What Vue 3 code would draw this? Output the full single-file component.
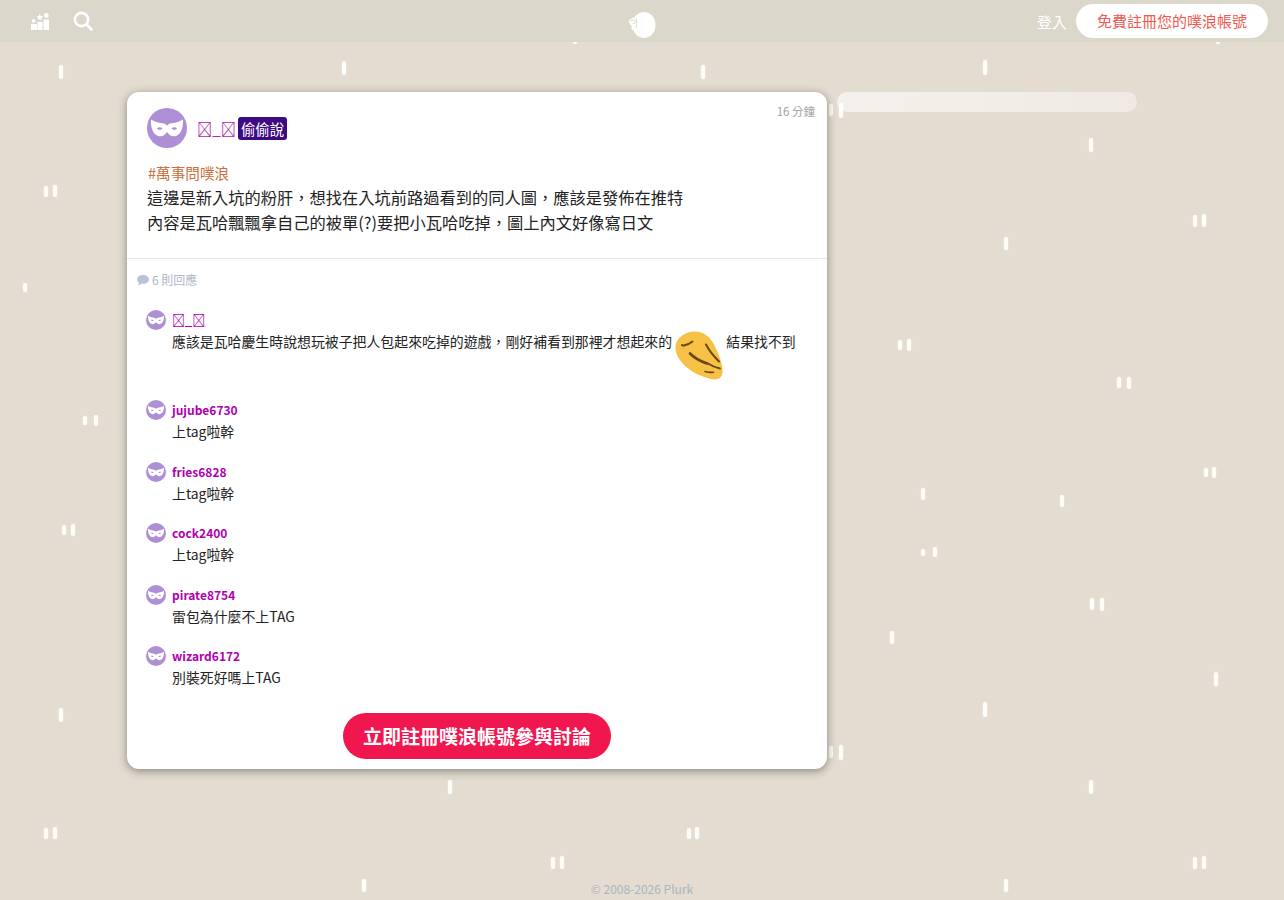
<template>
  <div class="page">
    <div class="snow">
      <i v-for="(s, idx) in specks" :key="idx" class="speck" :style="{ left: s[0] + 'px', top: s[1] + 'px', height: s[2] + 'px' }"></i>
    </div>

    <header class="nav">
      <div class="nav_left">
        <svg class="icon_top" viewBox="0 0 20 18" width="20" height="18">
          <path fill="#fff" d="M1 12h6v6H1zM7.500 10h5v8h-5zM13.500 7.500H19V18h-5.500z" />
          <circle cx="16.300" cy="3.400" r="2.400" fill="#fff" />
          <path fill="#fff" d="M9.800 1.800l1 2.200 2.300.3-1.700 1.600.5 2.300-2.100-1.200-2.100 1.200.5-2.300-1.700-1.600 2.300-.3z" />
          <circle cx="3.600" cy="8.900" r="1.800" fill="#fff" />
        </svg>
        <svg class="icon_search" viewBox="0 0 20 20" width="20" height="20">
          <circle cx="8.500" cy="8.500" r="6.600" fill="none" stroke="#fff" stroke-width="2.600" />
          <path d="M13.500 13.500L18.500 18.500" stroke="#fff" stroke-width="2.800" stroke-linecap="round" />
        </svg>
      </div>
      <svg class="logo" viewBox="0 0 30 28" width="30" height="28">
        <ellipse cx="18" cy="14" rx="11.500" ry="13" fill="#fff" />
        <path fill="#fff" d="M3 9c2-2 6-3 8-2v12c-2 1-5 0-6-2 1-.5 1-1 .6-2C4 14 2.500 11 3 9z" />
        <path fill="none" stroke="#dbd7cb" stroke-width="1" d="M4.500 9.500c2-1 4-.5 4.500 1 .4 1.500-1 2.500-2.300 2M9.500 7c1.500 2 1.800 6 .5 10" />
      </svg>
      <div class="nav_right">
        <a class="login">登入</a>
        <a class="signup">免費註冊您的噗浪帳號</a>
      </div>
    </header>

    <main class="content">
      <section class="card">
        <span class="time">16 分鐘</span>
        <div class="post">
          <div class="post_head">
            <svg class="avatar big" viewBox="0 0 40 40"><use href="#mask" /></svg>
            <span class="post_name">&#xE000;_&#xE000;</span>
            <span class="whisper">偷偷說</span>
          </div>
          <div class="post_body">
            <span class="tag">#萬事問噗浪</span><br />
            這邊是新入坑的粉肝，想找在入坑前路過看到的同人圖，應該是發佈在推特<br />
            內容是瓦哈飄飄拿自己的被單(?)要把小瓦哈吃掉，圖上內文好像寫日文
          </div>
        </div>

        <div class="replies">
          <div class="count">
            <svg viewBox="0 0 14 13" width="12" height="11">
              <path fill="#b9c3d8" d="M7 0c3.900 0 7 2.300 7 5.200s-3.100 5.200-7 5.200c-.7 0-1.300-.1-1.900-.2C4 11.300 2.500 12 1 12c.8-.8 1.300-1.800 1.400-2.800C.9 8.300 0 6.800 0 5.200 0 2.300 3.100 0 7 0z" />
            </svg>
            6 則回應
          </div>

          <div class="reply first">
            <svg class="avatar" viewBox="0 0 40 40"><use href="#mask" /></svg>
            <div class="reply_main">
              <a class="reply_name anon">&#xE000;_&#xE000;</a>
              <div class="reply_text with_emoji">
                應該是瓦哈慶生時說想玩被子把人包起來吃掉的遊戲，剛好補看到那裡才想起來的
                <svg class="emoji" viewBox="0 0 48 48" width="48" height="49">
                  <path fill="#f6c144" d="M19 0C28-.5 35 5 39 13 44 23 48 33 47.500 41 47 47 42 49 36 47.500 27 45.500 14 40 7 31 1 24-2 15 3 8 7 3 13 0 19 0z" />
                  <g fill="none" stroke="#66480f" stroke-linecap="round">
                    <path stroke-width="2" d="M7 13.500c1 .5 1.500 1 2 .5 3-.5 6-2 8.500-4" />
                    <path stroke-width="2.600" d="M15 22c5 5 11 8 17 10" />
                    <path stroke-width="2" d="M31 13c3 6 8 12 13 17" />
                    <path stroke-width="1.800" d="M33 32c3 2 7 4 12 5" />
                    <path stroke-width="1.600" d="M30 40c3 .8 6 1 8.500.8" />
                  </g>
                </svg>
                結果找不到
              </div>
            </div>
          </div>

          <div v-for="r in replies" :key="r.name" class="reply">
            <svg class="avatar" viewBox="0 0 40 40"><use href="#mask" /></svg>
            <div class="reply_main">
              <a class="reply_name">{{ r.name }}</a>
              <div class="reply_text">{{ r.text }}</div>
            </div>
          </div>
        </div>

        <div class="cta_row">
          <a class="cta">立即註冊噗浪帳號參與討論</a>
        </div>
      </section>
      <aside class="side"></aside>
    </main>

    <footer class="copy">© 2008-2026 Plurk</footer>

    <svg width="0" height="0" class="defs">
      <symbol id="mask" viewBox="0 0 40 40">
        <circle cx="20" cy="20" r="20" fill="#ae8fd6" />
        <path fill="#fff" fill-rule="evenodd" d="M4 11.500c4 2.300 7 3.300 10 3.600 2.500.2 4.800 1 6 2.700 1.200-1.700 3.500-2.500 6-2.700 3-.3 6-1.300 10-3.600.5 7-1.500 13.500-6 16-4 2-7.500.3-10-3.500-2.500 3.800-6 5.500-10 3.500C5.500 25 3.500 18.500 4 11.500zM10 20.300c1.700-1.300 4-1.300 5.500.3-1.700 1.700-4.200 1.600-5.500-.3zM30 20.300c-1.700-1.300-4-1.300-5.500.3 1.700 1.700 4.200 1.600 5.500-.3z" />
      </symbol>
    </svg>
  </div>
</template>

<script setup>
const replies = [
  { name: 'jujube6730', text: '上tag啦幹' },
  { name: 'fries6828', text: '上tag啦幹' },
  { name: 'cock2400', text: '上tag啦幹' },
  { name: 'pirate8754', text: '雷包為什麼不上TAG' },
  { name: 'wizard6172', text: '別裝死好嗎上TAG' }
]

// x, y, height
const specks = [
  [59, 65, 14], [342, 61, 14], [701, 65, 14], [983, 60, 15],
  [829, 104, 12], [839, 103, 15], [1089, 138, 14], [44, 186, 11], [53, 185, 12],
  [1193, 215, 12], [1202, 214, 13], [1004, 237, 13], [23, 283, 9],
  [898, 340, 10], [907, 339, 12], [1117, 377, 11], [1127, 377, 12],
  [83, 416, 9], [94, 415, 11], [1204, 468, 9], [1212, 467, 11],
  [921, 488, 12], [1060, 495, 12], [62, 525, 10], [71, 524, 12],
  [921, 549, 7], [933, 547, 10], [890, 631, 13], [1090, 598, 12], [1100, 598, 13],
  [1214, 672, 14], [59, 708, 14], [983, 702, 15], [829, 746, 12], [839, 745, 15],
  [448, 780, 14], [1089, 780, 14], [44, 828, 11], [53, 827, 12],
  [687, 828, 11], [695, 827, 12], [551, 857, 12], [560, 856, 13],
  [1193, 857, 12], [1202, 856, 13], [362, 879, 13], [1004, 879, 13],
  [573, 38, 6], [1216, 38, 6]
]
</script>

<style>
html,
body {
  margin: 0;
  background: #e4dcd0;
}
</style>

<style scoped>
.page {
  position: relative;
  height: 900px;
  overflow: hidden;
  background: #e4dcd0;
  font-family: 'Noto Sans CJK TC', 'Noto Sans', sans-serif;
  color: #222;
}
.defs {
  position: absolute;
}
.snow {
  position: absolute;
  inset: 0;
}
.speck {
  position: absolute;
  width: 4px;
  border-radius: 2px;
  background: #fffdf8;
  box-shadow: 0 0 2px rgba(255, 253, 248, 0.7);
}
.nav {
  position: relative;
  height: 42px;
  background: #dbd7cb;
  display: flex;
  align-items: center;
  justify-content: space-between;
  padding: 0 16px 0 30px;
}
.nav_left {
  display: flex;
  align-items: center;
  gap: 23px;
  width: 260px;
}
.logo {
  position: absolute;
  left: 626px;
  top: 11px;
}
.nav_right {
  display: flex;
  align-items: center;
  gap: 9px;
}
.login {
  color: #fff;
  font-size: 15px;
}
.signup {
  background: #fff;
  color: #f2584e;
  font-size: 15px;
  height: 34px;
  line-height: 34px;
  padding: 0 21px;
  border-radius: 17px;
}
.content {
  position: relative;
  display: flex;
  align-items: flex-start;
  gap: 10px;
  padding: 50px 0 0 127px;
}
.card {
  position: relative;
  width: 700px;
  height: 677px;
  background: #fff;
  border-radius: 12px;
  box-shadow: 0 2px 10px rgba(0, 0, 0, 0.4);
  display: flex;
  flex-direction: column;
}
.side {
  width: 300px;
  height: 20px;
  border-radius: 10px;
  background: linear-gradient(90deg, rgba(255, 255, 255, 0.58), rgba(255, 255, 255, 0.42));
}
.time {
  position: absolute;
  top: 11px;
  right: 12px;
  font-size: 11.5px;
  color: #a3a3a3;
}
.post {
  padding: 16px 20px 23px;
  border-bottom: 1px solid #e8e8e8;
}
.post_head {
  display: flex;
  align-items: center;
  height: 40px;
}
.avatar {
  width: 20px;
  height: 20px;
  flex: none;
  display: block;
}
.avatar.big {
  width: 40px;
  height: 40px;
  margin-right: 10px;
}
.post_name {
  color: #b026b0;
  font-size: 15.2px;
  margin-right: 2px;
}
.whisper {
  background: #3d0a82;
  color: #fff;
  font-size: 14.4px;
  line-height: 23px;
  padding: 0 3px;
  border-radius: 3px;
}
.post_body {
  margin-top: 12px;
  font-size: 16.25px;
  line-height: 25px;
  color: #222;
}
.tag {
  color: #c8703c;
  font-size: 14.6px;
  margin-left: 1px;
}
.replies {
  padding: 12px 10px 0;
  flex: 1;
}
.count {
  display: flex;
  align-items: center;
  gap: 3px;
  font-size: 12px;
  color: #aeb6c8;
  line-height: 18px;
  margin-bottom: 21px;
}
.reply {
  display: flex;
  gap: 6px;
  margin: 0 0 19.5px 9px;
}
.reply.first {
  margin-bottom: 20px;
}
.reply_main {
  flex: 1;
}
.reply_name {
  display: block;
  width: fit-content;
  color: #b000b0;
  font-size: 12px;
  font-weight: 700;
  line-height: 20px;
}
.reply_name.anon {
  font-weight: 400;
  font-size: 13px;
  text-decoration: underline;
}
.reply_text {
  font-size: 13.9px;
  line-height: 22px;
  color: #222;
}
.with_emoji {
  height: 50px;
}
.emoji {
  vertical-align: top;
  margin-top: 1px;
}
.cta_row {
  display: flex;
  justify-content: center;
  padding-bottom: 10px;
}
.cta {
  background: #f0174f;
  color: #fff;
  font-size: 19px;
  font-weight: 700;
  line-height: 46px;
  padding: 0 20px;
  border-radius: 23px;
}
.copy {
  position: absolute;
  left: 0;
  right: 0;
  bottom: 3px;
  text-align: center;
  font-size: 12px;
  color: #a9b6bd;
}
</style>
